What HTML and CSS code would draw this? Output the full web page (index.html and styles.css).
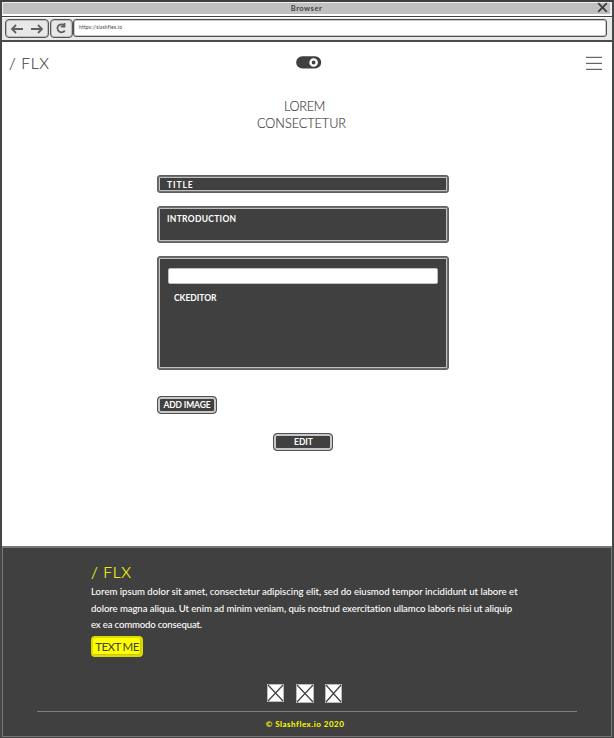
FILE: index.html
```html
<!DOCTYPE html>
<html lang="en">
<head>
<meta charset="utf-8">
<title>Slashflex.io</title>
<link rel="stylesheet" href="styles.css">
</head>
<body>
<div class="window">
  <div class="titlebar">
    <span class="window-title">Browser</span>
    <svg class="close" width="11" height="11" viewBox="0 0 11 11"><path d="M1.2 1.2L9.8 9.8M9.8 1.2L1.2 9.8"/></svg>
  </div>
  <div class="toolbar">
    <div class="tool nav">
      <svg width="36" height="12" viewBox="0 0 36 12"><path d="M14 6H3M7 2L3 6L7 10M22 6H33M29 2L33 6L29 10"/></svg>
    </div>
    <div class="tool reload">
      <svg width="12" height="12" viewBox="0 0 12 12"><path d="M8 2.200A4 4 0 1 0 8.800 7.500M8.500 0V3.700H4.800"/></svg>
    </div>
    <div class="address"><span>https://slashflex.io</span></div>
  </div>
  <header class="header">
    <div class="logo">/ FLX</div>
    <svg class="toggle" width="26" height="14" viewBox="0 0 26 14"><rect x="0.200" y="0.200" width="25" height="12.400" rx="6.200" fill="#404040"/><circle cx="17.600" cy="6.500" r="3.100" fill="#404040" stroke="#fff" stroke-width="2.400"/></svg>
    <div class="menu"><i></i><i></i><i></i></div>
  </header>
  <main class="main">
    <h1 class="heading"><span class="lorem">LOREM</span><span class="consec">CONSECTETUR</span></h1>
    <div class="form">
      <div class="field title"><span>TITLE</span></div>
      <div class="field intro"><span>INTRODUCTION</span></div>
      <div class="field editor"><div class="editor-bar"></div><span>CKEDITOR</span></div>
      <div class="button add"><span>ADD IMAGE</span></div>
      <div class="button edit"><span>EDIT</span></div>
    </div>
  </main>
  <footer class="footer">
    <div class="about">
      <div class="logo yellow">/ FLX</div>
      <p class="copy"><span class="l1">Lorem ipsum dolor sit amet, consectetur adipiscing elit, sed do eiusmod tempor incididunt ut labore et</span><span class="l2">dolore magna aliqua. Ut enim ad minim veniam, quis nostrud exercitation ullamco laboris nisi ut aliquip</span><span class="l3">ex ea commodo consequat.</span></p>
      <div class="text-me"><span>TEXT ME</span></div>
    </div>
    <div class="social">
      <svg width="17" height="18" viewBox="0 0 17 18"><rect x=".5" y=".5" width="16" height="17"/><path d="M1 1L16 17M16 1L1 17"/></svg>
      <svg width="18" height="19" viewBox="0 0 18 19"><rect x=".5" y=".5" width="17" height="18"/><path d="M1 1L17 18M17 1L1 18"/></svg>
      <svg width="17" height="19" viewBox="0 0 17 19"><rect x=".5" y=".5" width="16" height="18"/><path d="M1 1L16 18M16 1L1 18"/></svg>
    </div>
    <div class="legal"><span>© Slashflex.io 2020</span></div>
  </footer>
</div>
</body>
</html>
```
FILE: styles.css
```css
* { box-sizing: border-box; }
body { margin: 0; background: #fff; color: #404040; font-family: Lato, "Open Sans", sans-serif; font-variant-ligatures: none; }
span { white-space: nowrap; }
.window { width: 614px; height: 738px; border: 2px solid #45474a; border-top-color: #404040; border-bottom: 0; display: flex; flex-direction: column; overflow: hidden; background: linear-gradient(#fff 730px, #404040 730px); }
.titlebar { height: 14px; flex: none; display: flex; align-items: center; justify-content: center; background: #c0c0c0; border: 1px solid #eee; border-right-width: 2px; border-bottom: 2px solid #fff; position: relative; }
.window-title { font-size: 7.5px; font-weight: 700; line-height: 10px; letter-spacing: .5px; }
.close { position: absolute; right: 2px; top: -1px; fill: none; stroke: #404040; stroke-width: 1.900; }
.toolbar { height: 26px; flex: none; border-top: 1px solid #404040; border-bottom: 2px solid #4b4b4b; background: #e8e8e8; box-shadow: 0 -1px #888, inset 0 1px #fff; display: flex; padding: 2px 3px 0 3px; gap: 1px; }
.tool { height: 19px; border: 1px solid #555; border-radius: 4px; background: #e8e8e8; box-shadow: inset 0 0 0 1px #bbb; display: flex; align-items: center; justify-content: center; }
.tool svg { fill: none; stroke: #606060; stroke-width: 1.800; }
.nav { width: 44px; }
.reload { width: 23px; }
.address { flex: 1; height: 18px; border: 1px solid #505050; border-radius: 3px; background: #fff; box-shadow: inset 0 0 0 1px #c8c8c8; padding-left: 5px; font-size: 5px; line-height: 14px; margin: 0 2px 0 -1px; }
.address span { letter-spacing: .17px; }
.header { height: 43px; flex: none; display: flex; padding: 0 9px 0 7px; }
.logo { font-size: 15.500px; font-weight: 300; line-height: 20px; letter-spacing: .7px; white-space: nowrap; -webkit-text-stroke: .15px currentColor; }
.header .logo { margin: 11px 0 0; width: 287px; }
.toggle { margin-top: 14px; }
.menu { width: 16px; margin: 15px 1px 0 auto; display: flex; flex-direction: column; gap: 5px; }
.menu i { height: 1px; background: #666; box-shadow: 0 -1px #ddd; }
.main { height: 461px; flex: none; }
.heading { margin: 0; padding-top: 13px; display: flex; flex-direction: column; font-weight: 300; font-size: 12.700px; line-height: 17px; -webkit-text-stroke: .15px currentColor; }
.lorem { margin-left: 282px; letter-spacing: -.3px; }
.consec { margin-left: 255px; letter-spacing: -.05px; }
.form { width: 292px; margin: 43px 0 0 155px; display: flex; flex-direction: column; }
.field { border: 1px solid #606060; border-radius: 3px; background: #404040; box-shadow: inset 0 0 0 1px #707070, inset 0 0 0 2px #c0c0c0; color: #fff; font-size: 8.500px; font-weight: 700; line-height: 10px; padding-left: 9px; }
.title { height: 18px; padding-top: 4px; letter-spacing: .9px; }
.intro { height: 37px; margin-top: 13px; padding-top: 7px; letter-spacing: .3px; }
.editor { height: 114px; margin-top: 13px; padding: 11px 10px 0; }
.editor-bar { height: 16px; background: #fff; border: 1px solid #c0c0c0; border-radius: 2px; margin-bottom: 9px; }
.editor span { margin-left: 6px; }
.button { width: 60px; height: 18px; border: 1px solid #505050; border-radius: 4px; background: #404040; box-shadow: inset 0 0 0 2px #c8c8c8; color: #fff; font-size: 8.500px; font-weight: 700; line-height: 16px; display: flex; justify-content: center; }
.add { margin-top: 26px; letter-spacing: -.15px; }
.edit { margin: 19px 0 0 116px; padding-left: 1px; }
.footer { flex: 1; background: #404040; border: 1px solid #777; border-top-width: 2px; margin: 0 0 1px; display: flex; flex-direction: column; align-items: center; }
.about { height: 137px; width: 432px; margin-top: 14px; flex: none; }
.yellow { color: #ff0; }
.copy { margin: 2px 0 0; color: #fff; font-size: 9.600px; line-height: 16.500px; font-weight: 500; display: flex; flex-direction: column; align-items: flex-start; }
.l1 { letter-spacing: -.01px; }
.l2 { letter-spacing: -.08px; }
.l3 { letter-spacing: -.17px; }
.text-me { margin-top: 2px; width: 52px; height: 21px; background: #ff0; border: 2px solid #dada00; border-radius: 4px; box-shadow: inset -1px -1px #c8c800; color: #404040; font-size: 11.500px; letter-spacing: -.6px; line-height: 17px; display: flex; justify-content: center; }
.social { display: flex; gap: 12px; height: 19px; margin: -15px 0 0 -5px; }
.social svg { fill: #fff; stroke: #404040; stroke-width: 1.200; }
.social svg:last-child { margin-left: -1px; }
.social rect { stroke: #bbb; stroke-width: 1; }
.legal { width: 540px; margin-top: 8px; border-top: 1px solid #808080; color: #ff0; font-size: 8px; font-weight: 700; letter-spacing: .5px; line-height: 10px; padding: 7px 4px 0 0; text-align: center; }
```
